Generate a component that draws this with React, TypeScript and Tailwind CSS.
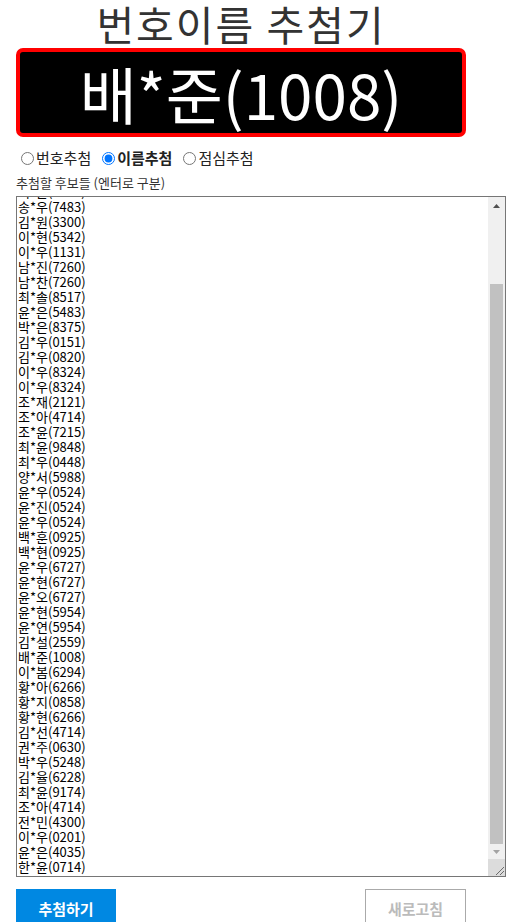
import React, { useEffect, useRef, useState } from 'react';

const candidates = [
  '김*민(0374)', '박*서(1120)', '정*우(2291)', '이*준(4410)',
  '송*우(7483)', '김*원(3300)', '이*현(5342)', '이*우(1131)', '남*진(7260)', '남*찬(7260)',
  '최*솔(8517)', '윤*은(5483)', '박*은(8375)', '김*우(0151)', '김*우(0820)', '이*우(8324)',
  '이*우(8324)', '조*재(2121)', '조*아(4714)', '조*윤(7215)', '최*윤(9848)', '최*우(0448)',
  '양*서(5988)', '윤*우(0524)', '윤*진(0524)', '윤*우(0524)', '백*훈(0925)', '백*현(0925)',
  '윤*우(6727)', '윤*현(6727)', '윤*오(6727)', '윤*현(5954)', '윤*연(5954)', '김*설(2559)',
  '배*준(1008)', '이*봄(6294)', '황*아(6266)', '황*지(0858)', '황*현(6266)', '김*선(4714)',
  '권*주(0630)', '박*우(5248)', '김*율(6228)', '최*윤(9174)', '조*아(4714)', '전*민(4300)',
  '이*우(0201)', '윤*은(4035)', '한*윤(0714)',
];

const modes = ['번호추첨', '이름추첨', '점심추첨'];

export default function App() {
  const [mode, setMode] = useState('이름추첨');
  const [text, setText] = useState(candidates.join('\n'));
  const [picked, setPicked] = useState('배*준(1008)');
  const areaRef = useRef<HTMLTextAreaElement>(null);

  useEffect(() => {
    if (areaRef.current) areaRef.current.scrollTop = areaRef.current.scrollHeight;
  }, []);

  const draw = () => {
    const list = text.split('\n').filter(s => s.trim());
    if (list.length) setPicked(list[Math.floor(Math.random() * list.length)]);
  };

  return (
    <div className="w-[515px] h-[922px] overflow-hidden bg-white font-['Noto_Sans_CJK_KR','Noto_Sans',sans-serif] text-[#222]">
      <div className="ml-4 w-[450px]">
        <h1 className="h-[48px] pt-[1px] text-center text-[41px] leading-[44px] text-[#333] tracking-[2px]">번호이름 추첨기</h1>

        {/* result box */}
        <div className="h-[89px] rounded-[7px] border-4 border-[#ff0000] bg-black flex items-center justify-center">
          <span className="text-white text-[62px] leading-none">{picked}</span>
        </div>

        {/* mode radios */}
        <div className="mt-[11px] flex items-center gap-[6px] text-[15px] leading-[20px]">
          {modes.map(m => (
            <label key={m} className={`flex items-center ${mode === m ? 'font-bold' : ''}`}>
              <input
                type="radio"
                name="mode"
                checked={mode === m}
                onChange={() => setMode(m)}
                className="ml-[5px] mr-[2px] my-0 w-[13px] h-[13px]"
              />
              {m}
            </label>
          ))}
        </div>

        <p className="mt-[7px] text-[13px] leading-[16px] text-[#333]">추첨할 후보들 (엔터로 구분)</p>

        {/* candidate list with scrollbar */}
        <div className="mt-[5px] w-[490px] h-[681px] border border-[#767676] flex">
          <textarea
            ref={areaRef}
            value={text}
            onChange={e => setText(e.target.value)}
            className="flex-1 h-full overflow-hidden resize-none outline-none px-px py-0 text-[13px] leading-[15px] text-black"
          />
          <div className="w-[17px] h-full bg-[#f0f0f0] flex flex-col">
            <div className="h-[17px] flex items-center justify-center">
              <svg width="7" height="4" viewBox="0 0 7 4"><path d="M0 4L3.5 0L7 4Z" fill="#505050" /></svg>
            </div>
            <div className="flex-1 flex flex-col justify-end px-[2px]">
              <div className="h-[560px] bg-[#c1c1c1]" />
            </div>
            <div className="h-[15px] flex items-center justify-center">
              <svg width="7" height="4" viewBox="0 0 7 4"><path d="M0 0L7 0L3.5 4Z" fill="#a3a3a3" /></svg>
            </div>
            <div className="h-[17px] bg-[#dcdcdc] flex items-end justify-end">
              <svg width="10" height="10" viewBox="0 0 10 10">
                <path d="M1 9L9 1M5 9L9 5" stroke="#6b6b6b" strokeWidth="1" />
              </svg>
            </div>
          </div>
        </div>

        <div className="mt-3 flex justify-between">
          <button
            onClick={draw}
            className="w-[100px] h-[40px] bg-[#0088e2] text-white font-bold text-[15px]"
          >
            추첨하기
          </button>
          <button
            onClick={() => setPicked('')}
            className="w-[101px] h-[40px] border border-[#aaa] bg-white text-[#bbb] font-bold text-[15px]"
          >
            새로고침
          </button>
        </div>
      </div>
    </div>
  );
}
